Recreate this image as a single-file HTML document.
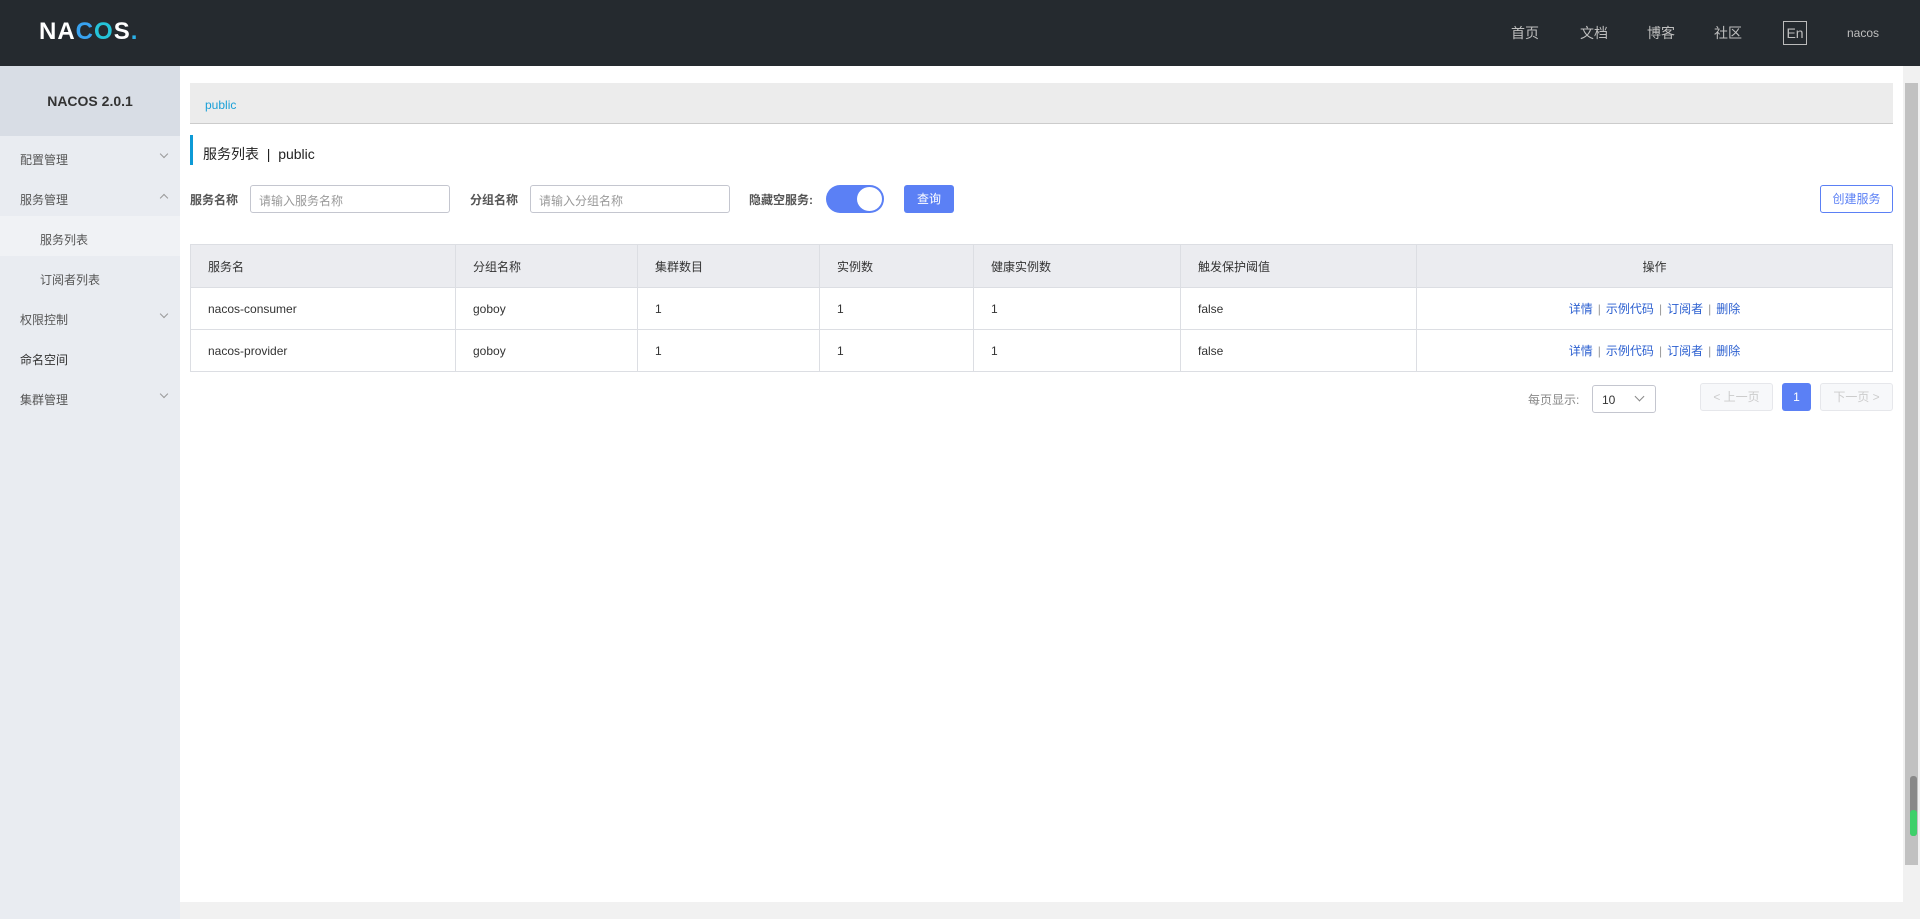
<!DOCTYPE html>
<html><head><meta charset="utf-8"><style>
*{box-sizing:border-box;margin:0;padding:0}
body{width:1920px;height:919px;overflow:hidden;background:#fff;font-family:"Liberation Sans","Noto Sans CJK SC",sans-serif;font-size:12px;color:#333;position:relative}
.a{position:absolute}
.hdr{left:0;top:0;width:1920px;height:66px;background:#252a2f}
.nav{color:#bfbfbf;font-size:14px;top:23px}
.side{left:0;top:66px;width:180px;height:853px;background:#e9ecf1}
.mi{left:20px;font-size:12px;color:#555}
.chev{left:161px;width:6px;height:6px;border-right:1px solid #999;border-bottom:1px solid #999}
.lbl{font-weight:bold;color:#555;top:191px}
.inp{top:185px;height:28px;border:1px solid #c4c6cf;border-radius:3px;color:#999;padding:6px 8px;font-size:12px}
table{border-collapse:collapse;position:absolute;left:190px;top:244px;width:1703px}
td,th{border:1px solid #dcdee3;height:42px;font-weight:normal;text-align:left;padding-left:17px;font-size:12px;color:#333}
th{background:#ebecf0;height:43px}
.op{text-align:center;padding:0;color:#2b5fd0}
.op i{font-style:normal;color:#999;margin:0 5px}
</style></head><body>
<div class="a hdr"></div>
<div class="a" style="left:39px;top:18px;color:#fff;font-size:24px;font-weight:bold;letter-spacing:1px">NA<span style="color:#38a2f0">C</span><span style="color:#25c3d8">O</span>S<span style="color:#2ab0e8">.</span></div>
<div class="a nav" style="left:1511px">首页</div>
<div class="a nav" style="left:1580px">文档</div>
<div class="a nav" style="left:1647px">博客</div>
<div class="a nav" style="left:1714px">社区</div>
<div class="a" style="left:1783px;top:21px;width:24px;height:24px;border:1px solid #bbb;color:#bfbfbf;font-size:14px;text-align:center;line-height:22px">En</div>
<div class="a" style="left:1847px;top:26px;color:#bfbfbf;font-size:12px">nacos</div>

<div class="a side"></div>
<div class="a" style="left:0;top:66px;width:180px;height:70px;background:#d8dde5;text-align:center;line-height:70px;font-weight:bold;font-size:14px;color:#333">NACOS 2.0.1</div>
<div class="a mi" style="top:151px">配置管理</div><div class="a chev" style="top:151px;transform:rotate(45deg)"></div>
<div class="a mi" style="top:191px">服务管理</div><div class="a chev" style="top:195px;transform:rotate(-135deg)"></div>
<div class="a" style="left:0;top:216px;width:180px;height:40px;background:#f0f2f5"></div>
<div class="a mi" style="left:40px;top:231px">服务列表</div>
<div class="a mi" style="left:40px;top:271px">订阅者列表</div>
<div class="a mi" style="top:311px">权限控制</div><div class="a chev" style="top:311px;transform:rotate(45deg)"></div>
<div class="a mi" style="top:351px;color:#333">命名空间</div>
<div class="a mi" style="top:391px">集群管理</div><div class="a chev" style="top:391px;transform:rotate(45deg)"></div>

<div class="a" style="left:190px;top:83px;width:1703px;height:41px;background:#ececec;border-bottom:1px solid #ccc"></div>
<div class="a" style="left:205px;top:98px;color:#1aa0d8;font-size:12px">public</div>
<div class="a" style="left:190px;top:135px;width:3px;height:30px;background:#0d9ad6"></div>
<div class="a" style="left:203px;top:144px;font-size:14px;color:#222">服务列表 &nbsp;|&nbsp; public</div>

<div class="a lbl" style="left:190px">服务名称</div>
<div class="a inp" style="left:250px;width:200px">请输入服务名称</div>
<div class="a lbl" style="left:470px">分组名称</div>
<div class="a inp" style="left:530px;width:200px">请输入分组名称</div>
<div class="a lbl" style="left:749px">隐藏空服务:</div>
<div class="a" style="left:826px;top:185px;width:58px;height:28px;border-radius:14px;background:#5b80f5"></div>
<div class="a" style="left:857px;top:187px;width:25px;height:24px;border-radius:50%;background:#fff"></div>
<div class="a" style="left:904px;top:185px;width:50px;height:28px;border-radius:3px;background:#5b80f5;color:#fff;text-align:center;line-height:28px">查询</div>
<div class="a" style="left:1820px;top:185px;width:73px;height:28px;border:1px solid #5b80f5;border-radius:3px;color:#5b80f5;text-align:center;line-height:26px">创建服务</div>

<table>
<tr><th style="width:265px">服务名</th><th style="width:182px">分组名称</th><th style="width:182px">集群数目</th><th style="width:154px">实例数</th><th style="width:207px">健康实例数</th><th style="width:236px">触发保护阈值</th><th style="text-align:center;padding:0">操作</th></tr>
<tr><td>nacos-consumer</td><td>goboy</td><td>1</td><td>1</td><td>1</td><td>false</td><td class="op">详情<i>|</i>示例代码<i>|</i>订阅者<i>|</i>删除</td></tr>
<tr><td>nacos-provider</td><td>goboy</td><td>1</td><td>1</td><td>1</td><td>false</td><td class="op">详情<i>|</i>示例代码<i>|</i>订阅者<i>|</i>删除</td></tr>
</table>

<div class="a" style="left:1528px;top:391px;color:#888">每页显示:</div>
<div class="a" style="left:1592px;top:385px;width:64px;height:28px;border:1px solid #c4c6cf;border-radius:3px;padding:7px 9px;color:#333">10</div>
<div class="a" style="left:1636px;top:393px;width:7px;height:7px;border-right:1px solid #888;border-bottom:1px solid #888;transform:rotate(45deg)"></div>
<div class="a" style="left:1700px;top:383px;width:73px;height:28px;border:1px solid #e6e7eb;background:#f7f8fa;border-radius:3px;color:#ccc;text-align:center;line-height:26px">&lt; 上一页</div>
<div class="a" style="left:1782px;top:383px;width:29px;height:28px;background:#5b80f5;border-radius:3px;color:#fff;text-align:center;line-height:28px">1</div>
<div class="a" style="left:1820px;top:383px;width:73px;height:28px;border:1px solid #e6e7eb;background:#f7f8fa;border-radius:3px;color:#ccc;text-align:center;line-height:26px">下一页 &gt;</div>

<div class="a" style="left:1903px;top:66px;width:17px;height:836px;background:#f1f1f1"></div>
<div class="a" style="left:1905px;top:83px;width:13px;height:782px;background:#c1c1c1"></div>
<div class="a" style="left:1910px;top:776px;width:7px;height:60px;border-radius:3px;background:#888"></div>
<div class="a" style="left:1910px;top:810px;width:7px;height:26px;border-radius:3px;background:#3ed06a"></div>
<div class="a" style="left:180px;top:902px;width:1740px;height:17px;background:#f1f1f1"></div>
</body></html>
